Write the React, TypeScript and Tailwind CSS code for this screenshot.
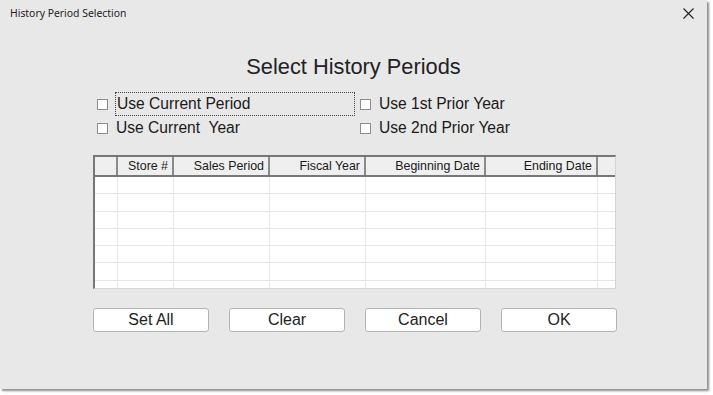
import { useState } from "react";

const cols = [
  { label: "", w: "w-[23px]" },
  { label: "Store #", w: "w-[56px]" },
  { label: "Sales Period", w: "w-[96px]" },
  { label: "Fiscal Year", w: "w-[96px]" },
  { label: "Beginning Date", w: "w-[120px]" },
  { label: "Ending Date", w: "w-[112px]" },
];

const Check = ({
  label,
  checked,
  onToggle,
  focused,
}: {
  label: string;
  checked: boolean;
  onToggle: () => void;
  focused?: boolean;
}) => (
  <div className="flex items-center h-[24px] cursor-default" onClick={onToggle}>
    <span className="w-[11px] h-[11px] border border-[#8c8c8c] bg-white flex items-center justify-center text-[9px] leading-none">
      {checked ? "✓" : ""}
    </span>
    <span
      className={
        focused
          ? "ml-[7px] w-[240px] h-[24px] border border-dotted border-[#444] pl-[1px] flex items-center whitespace-pre"
          : "ml-[8px] flex items-center whitespace-pre"
      }
    >
      {label}
    </span>
  </div>
);

const App = () => {
  const [checks, setChecks] = useState([false, false, false, false]);
  const toggle = (i: number) =>
    setChecks((c) => c.map((v, idx) => (idx === i ? !v : v)));

  return (
    <div className="w-[713px] h-[395px] bg-white font-['Liberation_Sans',Arial,sans-serif] text-[#1a1a1a]">
      <div className="w-[707px] h-[389px] bg-[#e8e8e8] shadow-[2px_2px_2px_rgba(0,0,0,0.45)] flex flex-col">
        {/* title bar */}
        <div className="h-[27px] flex items-center justify-between pl-[10px] pr-[13px]">
          <span className="text-[10.4px] font-['Noto_Sans',sans-serif] text-[#222]">
            History Period Selection
          </span>
          <svg width="11" height="11" viewBox="0 0 11 11">
            <path d="M0.5 0.5L10.5 10.5M10.5 0.5L0.5 10.5" stroke="#222" strokeWidth="1.1" />
          </svg>
        </div>

        <div className="mt-[28px] h-[24px] leading-[24px] text-center text-[21.8px] text-[#222]">
          Select History Periods
        </div>

        {/* options */}
        <div className="mt-[13px] ml-[97px] flex text-[15.6px]">
          <div className="w-[263px] flex flex-col">
            <Check label="Use Current Period" checked={checks[0]} onToggle={() => toggle(0)} focused />
            <Check label="Use Current  Year" checked={checks[1]} onToggle={() => toggle(1)} />
          </div>
          <div className="flex flex-col">
            <Check label="Use 1st Prior Year" checked={checks[2]} onToggle={() => toggle(2)} />
            <Check label="Use 2nd Prior Year" checked={checks[3]} onToggle={() => toggle(3)} />
          </div>
        </div>

        {/* grid */}
        <div className="mt-[15px] ml-[93px] w-[523px] h-[134px] border-l-2 border-t-2 border-[#777] border-r border-b border-r-[#d4d4d4] border-b-[#d4d4d4] bg-white flex flex-col text-[12.4px]">
          <div className="flex h-[20px] bg-[#efefef] border-b-2 border-[#777]">
            {cols.map((c, i) => (
              <div
                key={i}
                className={`${c.w} h-full border-r-2 border-[#8a8a8a] flex items-center justify-end pr-[4px] whitespace-nowrap`}
              >
                {c.label}
              </div>
            ))}
            <div className="flex-1" />
          </div>
          <div className="flex-1 overflow-hidden">
            {[0, 1, 2, 3, 4, 5, 6].map((r) => (
              <div key={r} className="flex h-[17.3px] border-b border-[#e6e6e6]">
                {cols.map((c, i) => (
                  <div key={i} className={`${c.w} h-full border-r border-[#e6e6e6]`} />
                ))}
                <div className="flex-1" />
              </div>
            ))}
          </div>
        </div>

        {/* buttons */}
        <div className="mt-[19px] ml-[93px] flex gap-[20px] text-[16px]">
          {["Set All", "Clear", "Cancel", "OK"].map((b) => (
            <button
              key={b}
              className="w-[116px] h-[24px] bg-white border border-[#b4b4b4] rounded-[3px] flex items-center justify-center text-[#222]"
            >
              {b}
            </button>
          ))}
        </div>
      </div>
    </div>
  );
};

export default App;
